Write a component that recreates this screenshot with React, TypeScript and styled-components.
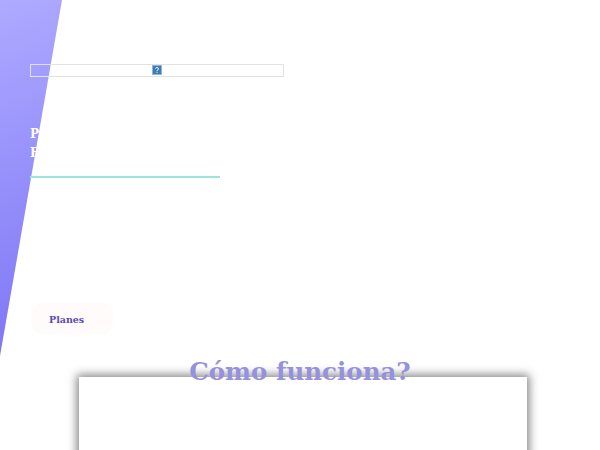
import styled, { createGlobalStyle } from 'styled-components';

const Global = createGlobalStyle`
    html, body {
        margin: 0;
        padding: 0;
        background: #fff;
        overflow: hidden;
    }
    body {
        font-family: "DejaVu Serif", serif;
    }
`

const Page = styled.div`
    width: 600px;
    height: 450px;
    overflow: hidden;
`

const Hero = styled.header`
    position: relative;
    height: 356px;
    padding: 64px 0 0 30px;
    box-sizing: border-box;
    display: flex;
    flex-direction: column;
    align-items: flex-start;

    &::before {
        content: "";
        position: absolute;
        inset: 0;
        width: 62px;
        background: linear-gradient(160deg, #aeaaff 0%, #7c74f6 100%);
        clip-path: polygon(0 0, 100% 0, 0 100%);
    }
    & > * {
        position: relative;
    }
`

const Banner = styled.div`
    width: 254px;
    height: 13px;
    box-sizing: border-box;
    border: 1px solid #e2e2e2;
    display: flex;
    align-items: flex-start;
    justify-content: center;
`

const BrokenImage = styled.svg`
    width: 10px;
    height: 10px;
    display: block;
`

const Taglines = styled.div`
    margin-top: 48px;
    color: #fff;
    font-size: 12px;
    font-weight: 700;
    line-height: 19px;
`

const Rule = styled.hr`
    width: 190px;
    height: 2px;
    margin: 13px 0 0;
    border: 0;
    background: #9be6dc;
`

const PlanButton = styled.a`
    margin-top: 125px;
    margin-left: 2px;
    width: 81px;
    height: 31px;
    box-sizing: border-box;
    padding: 2px 0 0 17px;
    display: flex;
    align-items: center;
    border-radius: 12px;
    background: #fefbfa;
    color: #5b4bb3;
    font-size: 9.5px;
    font-weight: 700;
`

const HowItWorks = styled.section`
    display: flex;
    flex-direction: column;
    align-items: center;
`

const Title = styled.h2`
    position: relative;
    z-index: 1;
    margin: 0;
    height: 21px;
    line-height: 32px;
    font-size: 24.5px;
    font-weight: 700;
    color: #9691de;
`

const VideoCard = styled.div`
    width: 448px;
    height: 200px;
    margin-left: 6px;
    background: #fff;
    box-shadow: 0 0 9px 2px rgba(0, 0, 0, 0.5);
`

const App = () => {
    return (
        <Page>
            <Global />
            <Hero>
                <Banner>
                    <BrokenImage viewBox="0 0 10 10">
                        <rect width="10" height="10" fill="#3d7db5" />
                        <rect x="0.5" y="0.5" width="9" height="9" fill="none" stroke="#8fb6d6" />
                        <path d="M3.5 3.6 C3.7 2.2 6.5 2.2 6.5 3.8 C6.5 5 5 4.8 5 6" fill="none" stroke="#fff" />
                        <rect x="4.5" y="6.8" width="1" height="1" fill="#fff" />
                    </BrokenImage>
                </Banner>
                <Taglines>
                    P<br />
                    F
                </Taglines>
                <Rule />
                <PlanButton>Planes</PlanButton>
            </Hero>
            <HowItWorks>
                <Title>Cómo funciona?</Title>
                <VideoCard />
            </HowItWorks>
        </Page>
    )
}

export default App;
